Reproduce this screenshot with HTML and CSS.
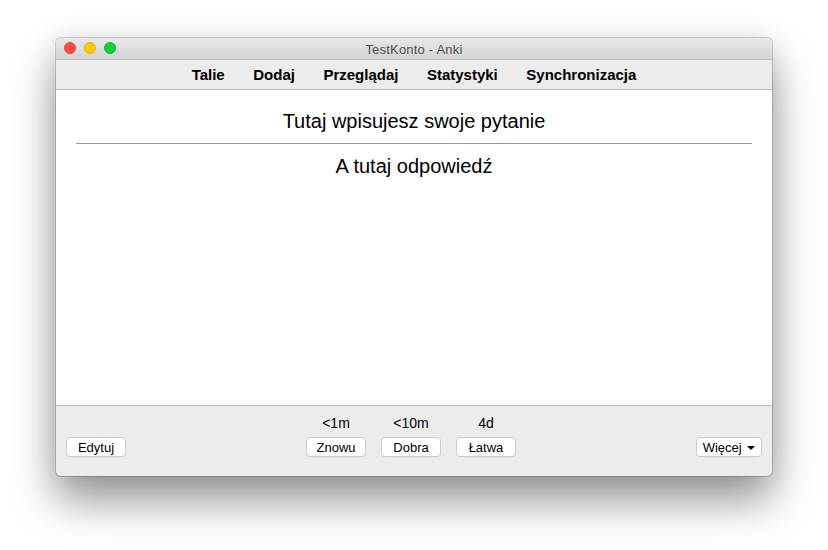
FILE: index.html
```html
<!DOCTYPE html>
<html lang="pl">
<head>
<meta charset="utf-8">
<title>TestKonto - Anki</title>
<link rel="stylesheet" href="styles.css">
</head>
<body>
<div class="frame">
<div class="window">
  <div class="titlebar">
    <div class="lights">
      <span class="light red"></span>
      <span class="light yellow"></span>
      <span class="light green"></span>
    </div>
    <div class="title">TestKonto - Anki</div>
  </div>
  <nav class="toolbar">
    <span class="tab">Talie</span>
    <span class="tab">Dodaj</span>
    <span class="tab">Przeglądaj</span>
    <span class="tab">Statystyki</span>
    <span class="tab">Synchronizacja</span>
  </nav>
  <main class="card">
    <div class="question">Tutaj wpisujesz swoje pytanie</div>
    <hr class="divider">
    <div class="answer">A tutaj odpowiedź</div>
  </main>
  <footer class="bottombar">
    <div class="side left">
      <button class="btn">Edytuj</button>
    </div>
    <div class="answers">
      <div class="ans">
        <span class="due">&lt;1m</span>
        <button class="btn">Znowu</button>
      </div>
      <div class="ans">
        <span class="due">&lt;10m</span>
        <button class="btn">Dobra</button>
      </div>
      <div class="ans">
        <span class="due">4d</span>
        <button class="btn">Łatwa</button>
      </div>
    </div>
    <div class="side right">
      <button class="btn more">Więcej <span class="caret"></span></button>
    </div>
  </footer>
</div>
</div>
</body>
</html>
```

FILE: styles.css
```css
html, body {
  margin: 0;
  padding: 0;
  background: #ffffff;
}

body {
  font-family: "Liberation Sans", Arial, sans-serif;
  color: #000;
  width: 828px;
  height: 550px;
  overflow: hidden;
}

.frame {
  padding: 38px 0 0 56px;
}

.window {
  width: 716px;
  height: 438px;
  border-radius: 5px;
  display: flex;
  flex-direction: column;
  box-shadow: 0 0 0 1px rgba(0,0,0,0.16), 0 24px 44px rgba(0,0,0,0.42), 0 0 30px rgba(0,0,0,0.08);
  background: #ececec;
}

.titlebar {
  height: 21px;
  position: relative;
  border-radius: 5px 5px 0 0;
  background: linear-gradient(#e8e8e8, #d4d4d4);
  border-bottom: 1px solid #c2c2c2;
  display: flex;
  align-items: center;
  justify-content: center;
}

.lights {
  position: absolute;
  left: 8px;
  top: 4px;
  display: flex;
  gap: 8px;
}

.light {
  width: 12px;
  height: 12px;
  border-radius: 50%;
  box-sizing: border-box;
}
.red { background: #fe4b45; border: 1px solid #ec3f3a; }
.yellow { background: #fec805; border: 1px solid #e9b400; }
.green { background: #13cf3a; border: 1px solid #0bbb2f; }

.title {
  font-size: 13px;
  color: #4d4d4d;
  padding-top: 1px;
  letter-spacing: 0.2px;
}

.toolbar {
  height: 29px;
  background: #ececec;
  border-bottom: 1px solid #bdbdbd;
  display: flex;
  align-items: center;
  justify-content: center;
  gap: 28.5px;
  font-weight: bold;
  font-size: 15px;
}

.card {
  flex: 1;
  background: #fff;
  padding: 20px 20px 0;
  text-align: center;
  font-size: 20px;
  border-bottom: 1px solid #bdbdbd;
}

.question, .answer {
  line-height: 23px;
}

.divider {
  border: 0;
  border-top: 1px solid #9a9a9a;
  margin: 10px 0 11px;
}

.bottombar {
  height: 70px;
  display: flex;
  align-items: flex-end;
  padding: 0 10px 19px;
  box-sizing: border-box;
  border-radius: 0 0 5px 5px;
}

.side {
  display: flex;
}
.side.left { width: 197px; }
.side.right { width: 203px; justify-content: flex-end; }

.answers {
  flex: 1;
  display: flex;
  justify-content: center;
  gap: 15px;
}

.ans {
  display: flex;
  flex-direction: column;
  align-items: center;
  gap: 6px;
}

.due {
  font-size: 14px;
  line-height: 16px;
}

.btn {
  font-family: "Liberation Sans", Arial, sans-serif;
  font-size: 13px;
  width: 60px;
  height: 20px;
  padding: 0;
  background: #fff;
  border: 1px solid #cbcbcb;
  border-radius: 4px;
  color: #000;
  box-shadow: 0 0.5px 0 rgba(0,0,0,0.05);
}

.btn.more {
  width: 66px;
}

.caret {
  display: inline-block;
  width: 0;
  height: 0;
  border-left: 4px solid transparent;
  border-right: 4px solid transparent;
  border-top: 4px solid #000;
  vertical-align: middle;
  margin-left: 2px;
}
```
